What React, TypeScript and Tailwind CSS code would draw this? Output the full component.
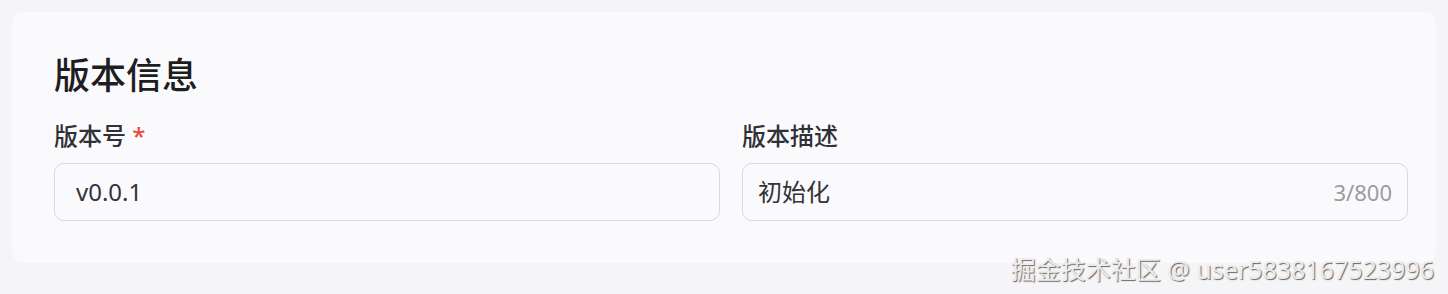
const font = {
  fontFamily: '"Noto Sans", "Noto Sans CJK SC", sans-serif',
};

export default function App() {
  return (
    <div
      className="relative h-[294px] w-full overflow-hidden bg-[#f5f5f8] pt-[12px] pl-[12px] pr-[12px]"
      style={font}
    >
      <section className="rounded-[12px] bg-[#fafafd] pt-[42px] pb-[42px] pl-[42px] pr-[28px]">
        <h2 className="text-[36px] font-medium leading-[44px] text-[#1d1d22]">
          版本信息
        </h2>
        <div className="mt-[22px] grid grid-cols-2 gap-x-[22px]">
          <div>
            <label className="block text-[24px] font-medium leading-[32px] text-[#303036]">
              版本号 <span className="text-[#e8493c]">*</span>
            </label>
            <div className="mt-[11px] flex h-[58px] items-center rounded-[10px] border border-[#d9d9de] bg-[#fafafd] px-[21px] text-[24px] text-[#333338]">
              v0.0.1
            </div>
          </div>
          <div>
            <label className="block text-[24px] font-medium leading-[32px] text-[#303036]">
              版本描述
            </label>
            <div className="mt-[11px] flex h-[58px] items-center justify-between rounded-[10px] border border-[#d9d9de] bg-[#fafafd] pl-[15px] pr-[15px] text-[24px] text-[#333338]">
              <span>初始化</span>
              <span className="text-[22px] text-[#9a9aa0]">3/800</span>
            </div>
          </div>
        </div>
      </section>
      <div className="absolute bottom-[8px] right-[14px] text-[25px] leading-[34px] text-[#ececee] [text-shadow:1px_1px_1px_#666]">
        掘金技术社区 @ user5838167523996
      </div>
    </div>
  );
}
